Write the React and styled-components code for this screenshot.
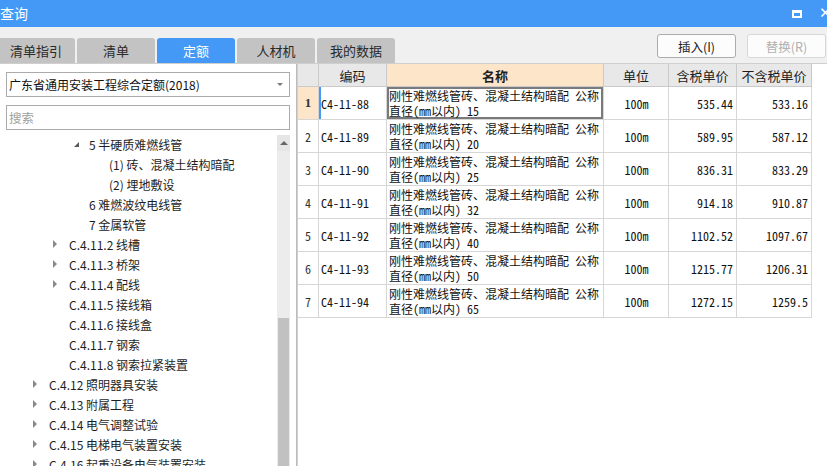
import React from "react";
import styled, { createGlobalStyle } from "styled-components";

const GlobalStyle = createGlobalStyle`
  html, body { margin: 0; padding: 0; background: #fff; }
  body { font-family: "Noto Sans CJK SC", "Noto Sans", sans-serif; }
  * { box-sizing: border-box; }
`;

const BLUE = "#4499f7";
const CJK = `"Noto Sans CJK SC", "Noto Sans", sans-serif`;
const CELL = `"Noto Sans Mono CJK SC", "Noto Sans CJK SC", monospace`;

const Window = styled.div`
  width: 827px;
  height: 466px;
  overflow: hidden;
  display: flex;
  flex-direction: column;
  background: #f0f0f0;
  font-family: ${CJK};
`;

const TitleBar = styled.div`
  height: 27px;
  flex: none;
  background: ${BLUE};
  display: flex;
  align-items: center;
  justify-content: space-between;
  color: #fff;
`;

const Title = styled.div`
  font-size: 14px;
  line-height: 27px;
`;

const WinButtons = styled.div`
  display: flex;
  align-items: center;
  gap: 17px;
  margin-right: -3px;
`;

const MaxIcon = styled.div`
  width: 10px;
  height: 8px;
  border: 2px solid #fff;
  border-top-width: 3px;
`;

const CloseIcon = styled.div`
  font-size: 15px;
  font-weight: 700;
  font-family: "DejaVu Sans", sans-serif;
  line-height: 1;
  width: 11px;
`;

const Toolbar = styled.div`
  height: 37px;
  flex: none;
  display: flex;
  justify-content: space-between;
  border-bottom: 1px solid #cfcfcf;
`;

const Tabs = styled.div`
  display: flex;
  align-items: flex-end;
  gap: 2px;
  margin-left: -3px;
`;

const Tab = styled.div`
  width: 78px;
  height: 25px;
  border-radius: 3px 3px 0 0;
  background: ${(p) => (p.$active ? BLUE : "#c3c3c3")};
  color: ${(p) => (p.$active ? "#fff" : "#2a2a2a")};
  font-size: 13px;
  display: flex;
  align-items: center;
  justify-content: center;
`;

const Actions = styled.div`
  display: flex;
  gap: 11px;
  padding-top: 7px;
  margin-right: 1px;
`;

const ActionButton = styled.div`
  width: 79px;
  height: 24px;
  border: 1px solid ${(p) => (p.$disabled ? "#d8d8d8" : "#acacac")};
  border-radius: 3px;
  background: #fcfcfc;
  color: ${(p) => (p.$disabled ? "#b0b0b0" : "#222")};
  font-size: 12.5px;
  display: flex;
  align-items: center;
  justify-content: center;
`;

const Body = styled.div`
  flex: 1;
  min-height: 0;
  display: flex;
`;

const LeftPanel = styled.div`
  width: 297px;
  flex: none;
  background: #fff;
  border-right: 1px solid #bcbcbc;
  padding: 8px 6px 0 6px;
  display: flex;
  flex-direction: column;
  overflow: hidden;
`;

const Select = styled.div`
  height: 25px;
  border: 1px solid #ababab;
  display: flex;
  align-items: center;
  justify-content: space-between;
  padding: 0 6px 0 2px;
  font-size: 12px;
  color: #111;
  flex: none;
`;

const Caret = styled.span`
  width: 0;
  height: 0;
  border-left: 3px solid transparent;
  border-right: 3px solid transparent;
  border-top: 3px solid #7a7a7a;
`;

const Search = styled.div`
  margin-top: 8px;
  height: 25px;
  border: 1px solid #ababab;
  display: flex;
  align-items: center;
  padding-left: 2px;
  font-size: 12.5px;
  color: #a0a0a0;
  flex: none;
`;

const TreeArea = styled.div`
  margin-top: 5px;
  flex: 1;
  min-height: 0;
  display: flex;
`;

const TreeList = styled.div`
  flex: 1;
  display: flex;
  flex-direction: column;
  margin-top: -1px;
`;

const TreeRow = styled.div`
  height: 20px;
  flex: none;
  display: flex;
  align-items: center;
  padding-left: ${(p) => 27 + p.$level * 20}px;
  font-size: 12px;
  color: #1e1e1e;
  white-space: nowrap;
`;

const ArrowBox = styled.span`
  width: 16px;
  flex: none;
  display: flex;
  align-items: center;
`;

const Collapsed = styled.span`
  width: 0;
  height: 0;
  border-top: 4px solid transparent;
  border-bottom: 4px solid transparent;
  border-left: 4px solid #8a8a8a;
`;

const Expanded = styled.span`
  width: 0;
  height: 0;
  margin-left: 1px;
  margin-top: 1px;
  border-left: 5px solid transparent;
  border-bottom: 5px solid #5a5a5a;
`;

const Scrollbar = styled.div`
  width: 13px;
  flex: none;
  background: #ececec;
  display: flex;
  flex-direction: column;
  align-items: center;
`;

const ScrollUp = styled.div`
  height: 16px;
  width: 13px;
  flex: none;
  display: flex;
  align-items: center;
  justify-content: center;
  background: #e6e6e6;
  &::after {
    content: "";
    border-left: 4px solid transparent;
    border-right: 4px solid transparent;
    border-bottom: 4px solid #666;
  }
`;

const Thumb = styled.div`
  width: 11px;
  height: 240px;
  flex: none;
  background: #c1c1c1;
`;

const GridPanel = styled.div`
  flex: 1;
  background: #fff;
  border-left: 1px solid #d0d0d0;
  overflow: hidden;
`;

const Grid = styled.div`
  display: grid;
  grid-template-columns: 21px 68px 217px 65px 68px 75px;
  width: 514px;
`;

const HeadCell = styled.div`
  height: 23px;
  background: ${(p) => (p.$hl ? "#fde5c9" : "#e8e8e8")};
  border-right: 1px solid #cacaca;
  border-bottom: 1px solid #cacaca;
  display: flex;
  align-items: center;
  justify-content: center;
  font-size: 13px;
  font-weight: ${(p) => (p.$hl ? 700 : 400)};
  color: #1e1e1e;
`;

const Cell = styled.div`
  height: 33px;
  border-right: 1px solid #d6d6d6;
  border-bottom: 1px solid #d6d6d6;
  display: flex;
  align-items: center;
  justify-content: ${(p) => p.$align || "flex-start"};
  padding: 0 ${(p) => (p.$align === "flex-end" ? "3px" : "1px")} 0 2px;
  font-family: ${CELL};
  font-size: 12px;
  color: #111;
  background: #fff;
`;

const NumCell = styled(Cell)`
  justify-content: center;
  padding: 0;
  background: ${(p) => (p.$sel ? "#fde5c9" : "#fff")};
  color: #333;
  font-family: ${(p) => (p.$sel ? `"Liberation Serif", serif` : CELL)};
  font-weight: ${(p) => (p.$sel ? 700 : 400)};
  font-size: ${(p) => (p.$sel ? "13px" : "12px")};
`;

const CodeCell = styled(Cell)`
  box-shadow: ${(p) => (p.$sel ? `inset 2px 0 0 ${BLUE}` : "none")};
`;

const NameCell = styled(Cell)`
  flex-direction: column;
  align-items: flex-start;
  justify-content: center;
  line-height: 15px;
  padding-left: 2px;
  box-shadow: ${(p) => (p.$sel ? "inset 0 0 0 2px #7a7a7a" : "none")};
`;

const Line = styled.span`
  display: block;
  height: 15px;
  white-space: nowrap;
`;

const tabs = ["清单指引", "清单", "定额", "人材机", "我的数据"];

const tree = [
  { l: 2, t: "5 半硬质难燃线管", a: "open" },
  { l: 3, t: "(1) 砖、混凝土结构暗配" },
  { l: 3, t: "(2) 埋地敷设" },
  { l: 2, t: "6 难燃波纹电线管" },
  { l: 2, t: "7 金属软管" },
  { l: 1, t: "C.4.11.2 线槽", a: "closed" },
  { l: 1, t: "C.4.11.3 桥架", a: "closed" },
  { l: 1, t: "C.4.11.4 配线", a: "closed" },
  { l: 1, t: "C.4.11.5 接线箱" },
  { l: 1, t: "C.4.11.6 接线盒" },
  { l: 1, t: "C.4.11.7 钢索" },
  { l: 1, t: "C.4.11.8 钢索拉紧装置" },
  { l: 0, t: "C.4.12 照明器具安装", a: "closed" },
  { l: 0, t: "C.4.13 附属工程", a: "closed" },
  { l: 0, t: "C.4.14 电气调整试验", a: "closed" },
  { l: 0, t: "C.4.15 电梯电气装置安装", a: "closed" },
  { l: 0, t: "C.4.16 起重设备电气装置安装", a: "closed" },
];

const rows = [
  ["C4-11-88", "15", "535.44", "533.16"],
  ["C4-11-89", "20", "589.95", "587.12"],
  ["C4-11-90", "25", "836.31", "833.29"],
  ["C4-11-91", "32", "914.18", "910.87"],
  ["C4-11-92", "40", "1102.52", "1097.67"],
  ["C4-11-93", "50", "1215.77", "1206.31"],
  ["C4-11-94", "65", "1272.15", "1259.5"],
];

export default function App() {
  return (
    <>
      <GlobalStyle />
      <Window>
        <TitleBar>
          <Title>查询</Title>
          <WinButtons>
            <MaxIcon />
            <CloseIcon>✕</CloseIcon>
          </WinButtons>
        </TitleBar>
        <Toolbar>
          <Tabs>
            {tabs.map((t) => (
              <Tab key={t} $active={t === "定额"}>
                {t}
              </Tab>
            ))}
          </Tabs>
          <Actions>
            <ActionButton>插入(I)</ActionButton>
            <ActionButton $disabled>替换(R)</ActionButton>
          </Actions>
        </Toolbar>
        <Body>
          <LeftPanel>
            <Select>
              <span>广东省通用安装工程综合定额(2018)</span>
              <Caret />
            </Select>
            <Search>搜索</Search>
            <TreeArea>
              <TreeList>
                {tree.map((n, i) => (
                  <TreeRow key={i} $level={n.l}>
                    <ArrowBox>
                      {n.a === "open" && <Expanded />}
                      {n.a === "closed" && <Collapsed />}
                    </ArrowBox>
                    {n.t}
                  </TreeRow>
                ))}
              </TreeList>
              <Scrollbar>
                <ScrollUp />
                <Thumb style={{ marginTop: 167 }} />
              </Scrollbar>
            </TreeArea>
          </LeftPanel>
          <GridPanel>
            <Grid>
              <HeadCell />
              <HeadCell>编码</HeadCell>
              <HeadCell $hl>名称</HeadCell>
              <HeadCell>单位</HeadCell>
              <HeadCell>含税单价</HeadCell>
              <HeadCell>不含税单价</HeadCell>
              {rows.map((r, i) => {
                const sel = i === 0;
                return (
                  <React.Fragment key={r[0]}>
                    <NumCell $sel={sel}>{i + 1}</NumCell>
                    <CodeCell $sel={sel}>{r[0]}</CodeCell>
                    <NameCell $sel={sel}>
                      <Line>刚性难燃线管砖、混凝土结构暗配 公称</Line>
                      <Line>直径(mm以内) {r[1]}</Line>
                    </NameCell>
                    <Cell $align="center">100m</Cell>
                    <Cell $align="flex-end">{r[2]}</Cell>
                    <Cell $align="flex-end">{r[3]}</Cell>
                  </React.Fragment>
                );
              })}
            </Grid>
          </GridPanel>
        </Body>
      </Window>
    </>
  );
}
